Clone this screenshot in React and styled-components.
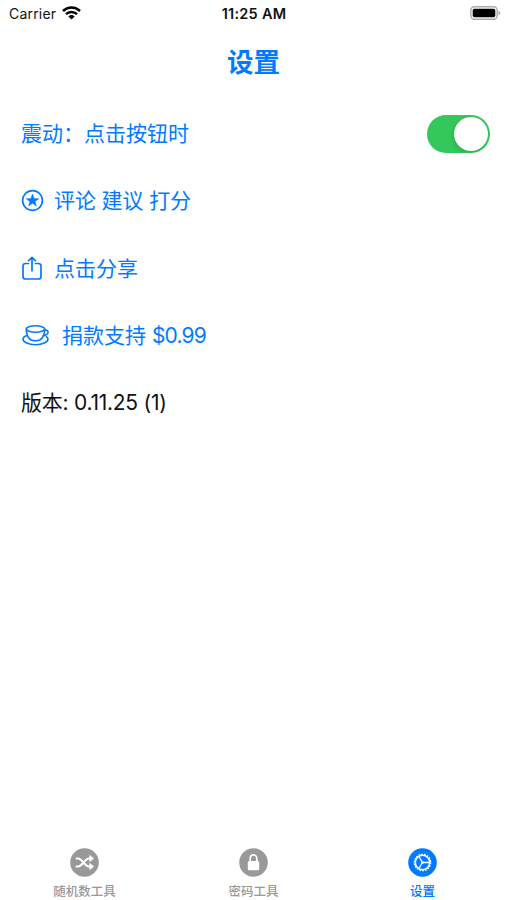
import React from 'react';
import styled, { createGlobalStyle } from 'styled-components';

const GlobalStyle = createGlobalStyle`
  * {
    margin: 0;
    padding: 0;
    box-sizing: border-box;
  }
  body {
    background-color: #fff;
    font-family: Inter, "Noto Sans CJK SC", sans-serif;
  }
  svg {
    display: block;
    flex: none;
  }
`;

const Screen = styled.div`
  display: flex;
  flex-direction: column;
  height: 900px;
  overflow: hidden;
  color: #007aff;
`;

const StatusBar = styled.header`
  display: grid;
  grid-template-columns: 1fr auto 1fr;
  align-items: center;
  height: 27px;
  padding: 0 6px 0 9px;
  color: #111;
  font-size: 14px;
  line-height: 20px;
`;

const Carrier = styled.div`
  display: flex;
  align-items: center;
  gap: 6px;
  letter-spacing: 0.2px;

  svg {
    margin-top: -1px;
  }
`;

const Time = styled.span`
  padding-right: 2px;
  font-size: 14.5px;
  font-weight: 600;
  letter-spacing: 0.25px;
`;

const Battery = styled.div`
  display: flex;
  justify-content: flex-end;
  margin-top: -1px;
`;

const Title = styled.h1`
  height: 73px;
  padding-top: 15px;
  font-size: 26.5px;
  font-weight: 600;
  line-height: 40px;
  text-align: center;
`;

const List = styled.main`
  flex: 1;
  padding: 0 17px 0 21px;
`;

const Row = styled.div`
  display: flex;
  align-items: center;
  justify-content: ${({ $spread }) => ($spread ? 'space-between' : 'flex-start')};
  gap: ${({ $gap }) => $gap || 0}px;
  height: 67.3px;
  color: ${({ $plain }) => ($plain ? '#111' : 'inherit')};
  font-size: 21px;
  line-height: 30px;
  white-space: pre;
`;

const Label = styled.span`
  padding-top: 0.6px;
  letter-spacing: ${({ $spacing }) => $spacing || 0}px;
`;

const Price = styled.span`
  letter-spacing: -0.8px;
`;

const Switch = styled.button`
  display: flex;
  justify-content: flex-end;
  width: 63px;
  height: 38px;
  padding: 2px;
  border: none;
  border-radius: 19px;
  background-color: #34c759;

  span {
    width: 34px;
    height: 34px;
    border-radius: 50%;
    background-color: #fff;
    box-shadow: -1px 2px 4px rgba(0, 0, 0, 0.12);
  }
`;

const TabBar = styled.nav`
  display: grid;
  grid-template-columns: repeat(3, 1fr);
  height: 52px;
`;

const Tab = styled.div`
  display: flex;
  flex-direction: column;
  align-items: center;
  gap: 6px;
  padding-top: 0.4px;
  color: ${({ $active }) => ($active ? '#007aff' : '#999')};
  font-size: 12.5px;
  font-weight: 500;
  line-height: 17px;
`;

const WifiIcon = () => (
  <svg width="19" height="14" viewBox="0 0 19 14">
    <g fill="none" stroke="#000" strokeWidth="2.5">
      <path d="M1 5a12.2 12.2 0 0 1 17 0" />
      <path d="M4 8.2a7.8 7.8 0 0 1 11 0" />
    </g>
    <path d="M6.4 10.4a4.5 4.5 0 0 1 6.2 0L9.5 13.6z" fill="#000" />
  </svg>
);

const BatteryIcon = () => (
  <svg width="31" height="14" viewBox="0 0 31 14">
    <rect x="0.8" y="0.8" width="26.4" height="12.4" rx="3.6" fill="#fff" stroke="#aaa" strokeWidth="1.4" />
    <rect x="2.7" y="2.7" width="22.6" height="8.6" rx="1.7" fill="#000" />
    <path d="M28.5 4.7c2.4 1.1 2.4 3.5 0 4.6z" fill="#aaa" />
  </svg>
);

const StarIcon = () => (
  <svg width="23" height="23" viewBox="0 0 23 23">
    <circle cx="11.5" cy="11.5" r="9.9" fill="none" stroke="currentColor" strokeWidth="1.7" />
    <path
      d="M11.5 5.1l1.55 4.5 4.75.07-3.8 2.85 1.4 4.55-3.9-2.75-3.9 2.75L9 12.52 5.2 9.67l4.75-.07z"
      fill="currentColor"
      stroke="currentColor"
      strokeWidth="0.5"
    />
  </svg>
);

const ShareIcon = () => (
  <svg width="22" height="26" viewBox="0 0 22 26">
    <g fill="none" stroke="currentColor" strokeWidth="1.7" strokeLinecap="round" strokeLinejoin="round">
      <path d="M7.5 8.5H4.6C3 8.5 2 9.5 2 11.1v10.3C2 23 3 24 4.6 24h12.8c1.6 0 2.6-1 2.6-2.6V11.1c0-1.6-1-2.6-2.6-2.6h-2.9" />
      <path d="M11 15.8V2.5M7.6 5.7L11 2.3l3.4 3.4" />
    </g>
  </svg>
);

const CupIcon = () => (
  <svg width="29" height="24" viewBox="0 0 29 24">
    <g fill="none" stroke="currentColor" strokeWidth="1.6" strokeLinecap="round">
      <ellipse cx="14.5" cy="5" rx="9.2" ry="3.2" />
      <path d="M5.3 5c0 5.5 1.5 8.8 4.5 10.7 2.2 1.3 7.2 1.3 9.4 0C22.2 13.8 23.7 10.5 23.7 5" />
      <path d="M23.6 6.2c4-.5 4.4 2.4 2.2 4.2-1 .8-2.4 1.3-3.5 1.4" />
      <path d="M6.2 11.6C3.6 12.4 2 13.6 2 15.1c0 3.2 5.6 5.6 12.5 5.6S27 18.3 27 15.1c0-.9-.6-1.7-1.6-2.4" />
    </g>
  </svg>
);

const ShuffleIcon = () => (
  <svg width="29" height="29" viewBox="0 0 29 29">
    <circle cx="14.5" cy="14.5" r="14.3" fill="currentColor" />
    <g fill="none" stroke="#fff" strokeWidth="2" strokeLinecap="round" strokeLinejoin="round">
      <path d="M6.5 10.5h1.5c4.5 0 6.5 8 11 8h1.5" />
      <path d="M6.5 18.5h1.5c4.5 0 6.5-8 11-8h1.5" />
    </g>
    <path d="M19.5 6.8l4.5 3.7-4.5 3.7zM19.5 14.8l4.5 3.7-4.5 3.7z" fill="#fff" />
  </svg>
);

const LockIcon = () => (
  <svg width="29" height="29" viewBox="0 0 29 29">
    <circle cx="14.5" cy="14.5" r="14.3" fill="currentColor" />
    <rect x="8.8" y="13" width="11.4" height="9.3" rx="1.5" fill="#fff" />
    <path d="M11.2 14v-3.6c0-4.6 6.6-4.6 6.6 0V14" fill="none" stroke="#fff" strokeWidth="1.7" />
  </svg>
);

const GearIcon = () => (
  <svg width="29" height="29" viewBox="0 0 29 29">
    <circle cx="14.5" cy="14.5" r="14.3" fill="currentColor" />
    <g fill="none" stroke="#fff">
      <circle cx="14.5" cy="14.5" r="8.2" strokeWidth="1.3" strokeDasharray="1.7 1.162" />
      <circle cx="14.5" cy="14.5" r="7.2" strokeWidth="1.5" />
      <path d="M14.5 14.5h6.8M14.5 14.5l-3.6-6M14.5 14.5l-3.6 6" strokeWidth="1.3" />
    </g>
    <circle cx="14.5" cy="14.5" r="1.4" fill="#fff" />
  </svg>
);

const tabs = [
  { label: '随机数工具', icon: <ShuffleIcon /> },
  { label: '密码工具', icon: <LockIcon /> },
  { label: '设置', icon: <GearIcon />, active: true },
];

const App = () => {
  return (
    <>
      <GlobalStyle />
      <Screen>
        <StatusBar>
          <Carrier>
            Carrier
            <WifiIcon />
          </Carrier>
          <Time>11:25 AM</Time>
          <Battery>
            <BatteryIcon />
          </Battery>
        </StatusBar>

        <Title>设置</Title>

        <List>
          <Row $spread>
            <Label>震动：点击按钮时</Label>
            <Switch type="button" role="switch" aria-checked="true">
              <span />
            </Switch>
          </Row>
          <Row $gap={10}>
            <StarIcon />
            <Label $spacing={-0.1}>评论 建议 打分</Label>
          </Row>
          <Row $gap={11}>
            <ShareIcon />
            <Label>点击分享</Label>
          </Row>
          <Row $gap={12}>
            <CupIcon />
            <Label>
              捐款支持 <Price>$0.99</Price>
            </Label>
          </Row>
          <Row $plain>
            <Label $spacing={-0.25}>版本: 0.11.25 (1)</Label>
          </Row>
        </List>

        <TabBar>
          {tabs.map((tab) => (
            <Tab key={tab.label} $active={tab.active}>
              {tab.icon}
              <span>{tab.label}</span>
            </Tab>
          ))}
        </TabBar>
      </Screen>
    </>
  );
};

export default App;
